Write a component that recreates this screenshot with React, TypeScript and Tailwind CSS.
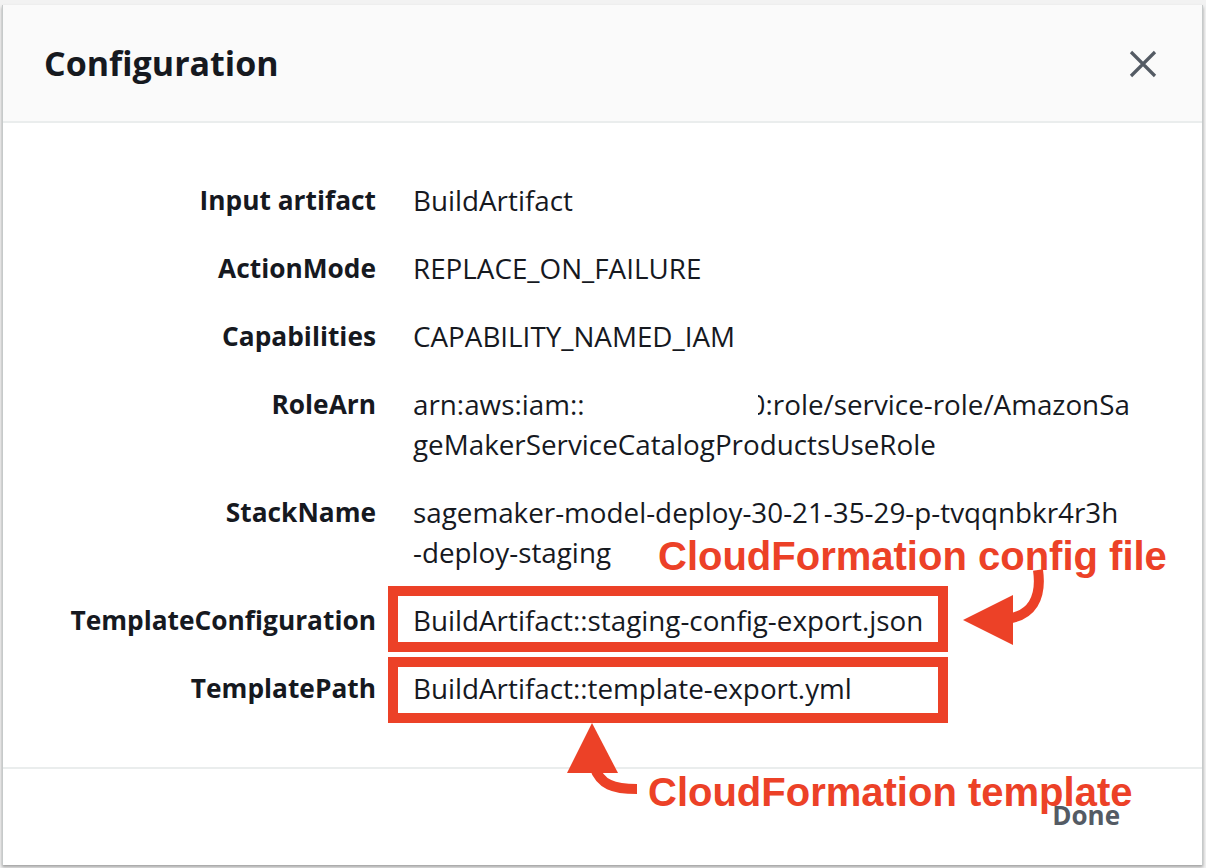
import React from "react";

const rows: { label: string; value: React.ReactNode }[] = [
  { label: "Input artifact", value: "BuildArtifact" },
  { label: "ActionMode", value: "REPLACE_ON_FAILURE" },
  { label: "Capabilities", value: "CAPABILITY_NAMED_IAM" },
  {
    label: "RoleArn",
    value: (
      <>
        <span className="flex items-center">
          <span>arn:aws:iam::</span>
          <span className="inline-block w-[173px]" />
          <span className="inline-flex w-[8px] justify-end overflow-hidden">
            <span>0</span>
          </span>
          <span>:role/service-role/AmazonSa</span>
        </span>
        <span className="block">geMakerServiceCatalogProductsUseRole</span>
      </>
    ),
  },
  {
    label: "StackName",
    value: (
      <>
        <span className="block">sagemaker-model-deploy-30-21-35-29-p-tvqqnbkr4r3h</span>
        <span className="block">-deploy-staging</span>
      </>
    ),
  },
  { label: "TemplateConfiguration", value: "BuildArtifact::staging-config-export.json" },
  { label: "TemplatePath", value: "BuildArtifact::template-export.yml" },
];

export default function App() {
  return (
    <div className="relative w-[1206px] h-[868px] overflow-hidden bg-[#f2f2f2] pt-[5px] pl-[2px] pr-[3px] font-['Open_Sans',sans-serif]">
      <div className="flex h-[860px] flex-col border-l border-r border-[#c6caca] bg-white shadow-[0_2px_3px_rgba(0,0,0,0.35)]">
        <div className="flex h-[118px] items-center justify-between border-b-2 border-[#eaeded] bg-[#fafafa] pl-[41px] pr-[45px]">
          <h1 className="text-[34px] font-bold text-[#16191f]">Configuration</h1>
          <svg width="28" height="28" viewBox="0 0 28 28" className="mt-[1px]">
            <path d="M2 2 L26 26 M26 2 L2 26" stroke="#545b64" strokeWidth="3.2" fill="none" />
          </svg>
        </div>
        <div className="flex-1 pt-[57px]">
          <div className="grid grid-cols-[373px_722px] gap-x-[37px] gap-y-[28px] text-[27.8px] leading-[40px] text-[#16191f]">
            {rows.map((r) => (
              <React.Fragment key={r.label}>
                <div className="text-right text-[26.3px] font-bold">{r.label}</div>
                <div className="whitespace-nowrap">{r.value}</div>
              </React.Fragment>
            ))}
          </div>
        </div>
        <div className="flex h-[98px] justify-end border-t-2 border-[#eaeded] pr-[82px] pt-[29px]">
          <span className="text-[26px] font-bold leading-[34px] text-[#545b64]">Done</span>
        </div>
      </div>

      {/* annotation overlay */}
      <div className="absolute left-[388px] top-[586px] h-[66px] w-[560px] border-[10px] border-[#ec4127]" />
      <div className="absolute left-[388px] top-[657px] h-[66px] w-[560px] border-[10px] border-[#ec4127]" />
      <svg className="absolute left-0 top-0" width="1206" height="868" viewBox="0 0 1206 868">
        <path d="M1038 570 C 1042 598, 1032 616, 1006 619" stroke="#ec4127" strokeWidth="10" fill="none" />
        <polygon points="963,620 1013,595 1013,645" fill="#ec4127" />
        <path d="M594 766 C 600 785, 614 789, 637 789" stroke="#ec4127" strokeWidth="10" fill="none" />
        <polygon points="592,723 567,773 618,773" fill="#ec4127" />
      </svg>
      <div className="absolute left-[658px] top-[536px] whitespace-nowrap font-['Liberation_Sans',Arial,sans-serif] text-[40px] font-bold leading-[40px] text-[#ec4127]">
        CloudFormation config file
      </div>
      <div className="absolute left-[648px] top-[772px] whitespace-nowrap font-['Liberation_Sans',Arial,sans-serif] text-[40px] font-bold leading-[40px] text-[#ec4127]">
        CloudFormation template
      </div>
    </div>
  );
}
